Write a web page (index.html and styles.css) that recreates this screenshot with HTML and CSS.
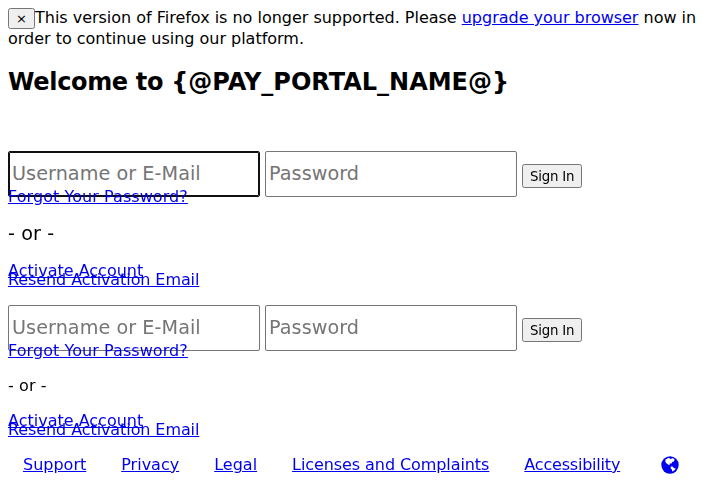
FILE: index.html
```html
<!DOCTYPE html>
<html lang="en">
<head>
<meta charset="utf-8">
<title>Sign In</title>
<link rel="stylesheet" href="styles.css">
</head>
<body>
<div class="notice"><button type="button" class="close">×</button>This version of Firefox is no longer supported. Please <a href="#">upgrade your browser</a> now in order to continue using our platform.</div>
<h2 class="title"><span class="lead">Welcome to </span>{@PAY_PORTAL_NAME@}</h2>
<form class="login">
<div class="fields"><input class="field" type="text" placeholder="Username or E-Mail" autofocus> <input class="field" type="password" placeholder="Password"> <button class="submit" type="button">Sign In</button></div>
<div class="forgot"><a href="#">Forgot Your Password?</a></div>
<div class="or large">- or -</div>
<div class="links"><a href="#">Activate Account</a><a class="resend" href="#">Resend Activation Email</a></div>
</form>
<form class="login second">
<div class="fields"><input class="field" type="text" placeholder="Username or E-Mail"> <input class="field" type="password" placeholder="Password"> <button class="submit" type="button">Sign In</button></div>
<div class="forgot"><a href="#">Forgot Your Password?</a></div>
<div class="or">- or -</div>
<div class="links"><a href="#">Activate Account</a><a class="resend" href="#">Resend Activation Email</a></div>
</form>
<footer class="footer">
<a href="#">Support</a><a href="#">Privacy</a><a href="#">Legal</a><a class="licenses" href="#">Licenses and Complaints</a><a class="access" href="#">Accessibility</a>
<a href="#" class="globe" aria-label="Language"><svg viewBox="0 0 18 18" width="18" height="18"><circle cx="9" cy="9" r="8.7" fill="#0000ee"/><path d="M4.6 3.6 7.6 1.8 9.6 2.9 12 2.1 13.7 3.8 12.7 5.4 11.2 6 10.6 7.6 8.6 7.4 8.6 9.2 7 8.5 5.4 7.2 4.2 5.5zM10 10.4l1.6.1 1.2 1.4 2 .7-1.6 1.9-2 1.1-.3-2-1.4-1.3z" fill="#fff"/></svg></a>
</footer>
</body>
</html>
```
FILE: styles.css
```css
body {
  margin: 8px 8px 0;
  height: 472px;
  overflow: hidden;
  font: 16px/21px "DejaVu Sans", sans-serif;
  color: #000;
  background: #fff;
}
a { color: #0000ee; text-decoration: underline; }
.notice { height: 42px; line-height: normal; letter-spacing: -0.015px; }
.close {
  box-sizing: border-box;
  width: 27px;
  height: 21px;
  margin: 0;
  padding: 1px 6px;
  vertical-align: top;
  font: 13px "DejaVu Sans", sans-serif;
}
.title { margin: 18px 0 55px; font-size: 24px; line-height: 28px; letter-spacing: 0; }
.lead { letter-spacing: -0.33px; }
.fields { display: flex; align-items: flex-start; gap: 5px; height: 46px; }
.field {
  box-sizing: border-box;
  width: 252px;
  height: 46px;
  padding: 0 3px 2px;
  border: 1px solid #767676;
  border-radius: 2px;
  font: 19.2px "DejaVu Sans", sans-serif;
  letter-spacing: 0.06px;
}
.field::placeholder { color: #757575; }
.field:focus { outline: 1px solid #101010; border-color: #101010; outline-offset: -2px; }
.submit {
  box-sizing: border-box;
  width: 60px;
  height: 24px;
  margin: 13px 0 0;
  padding: 1px 6px;
  font: 13.333px "DejaVu Sans", sans-serif;
  letter-spacing: -0.2px;
  white-space: nowrap;
}
.forgot { position: relative; height: 9px; line-height: 0; letter-spacing: 0.065px; }
.or { margin: 15px 0 20px; line-height: 21px; letter-spacing: 0.1px; }
.large { margin: 17px 0 22px; font-size: 19.2px; }
.links { display: flex; flex-direction: column; height: 18px; line-height: 9px; }
.resend { letter-spacing: -0.09px; }
.second { margin-top: 21px; }
.footer { display: flex; align-items: center; gap: 35px; padding-left: 15px; margin-top: 20px; }
.licenses { letter-spacing: -0.08px; }
.access { letter-spacing: -0.2px; }
.globe { display: flex; margin-left: 6px; }
```
